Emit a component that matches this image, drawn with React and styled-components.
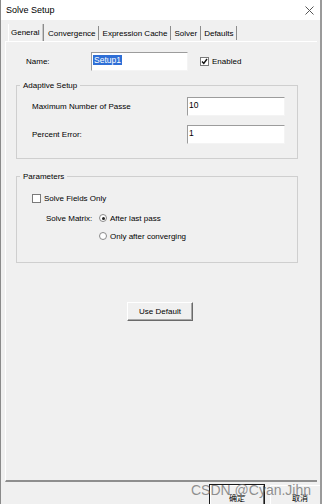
import React from 'react'
import styled, { createGlobalStyle } from 'styled-components'

const Global = createGlobalStyle`
  html, body { margin: 0; padding: 0; background: #f0f0f0; }
  body { font-family: "Liberation Sans", Arial, sans-serif; font-size: 8px; color: #000; }
  * { box-sizing: border-box; }
`

const Window = styled.div`
  position: relative;
  width: 322px;
  height: 504px;
  display: flex;
  flex-direction: column;
  border-left: 1px solid #8a8a8a;
  border-right: 2px solid #9a9a9a;
  background: #f0f0f0;
  overflow: hidden;
  white-space: nowrap;
`

const TitleBar = styled.div`
  height: 20px;
  background: #fff;
  display: flex;
  align-items: center;
  justify-content: space-between;
  padding: 0 6px 0 5px;
  font-size: 9px;
`

const Body = styled.div`
  flex: 1;
  display: flex;
  flex-direction: column;
  padding-top: 4px;
`

const TabStrip = styled.div`
  display: flex;
  align-items: flex-end;
  height: 17px;
  padding-left: 7px;
`

const Tab = styled.div`
  height: ${({ active }) => (active ? '17px' : '14px')};
  display: flex;
  align-items: center;
  padding: ${({ active }) => (active ? '0 4px 0 2px' : '0 2.5px')};
  margin-bottom: ${({ active }) => (active ? '0' : '1px')};
  border-left: 1px solid ${({ active }) => (active ? '#fff' : 'transparent')};
  border-right: 1px solid #8c8c8c;
  box-shadow: ${({ active }) => (active ? 'inset -1px 0 0 #c8c8c8' : 'none')};
`

const Panel = styled.div`
  flex: 1;
  display: flex;
  flex-direction: column;
  margin: 0 3px 0 4px;
  border-top: 1px solid #fff;
  border-left: 1px solid #fff;
  border-bottom: 2px solid #8e8e8e;
  padding: 10px 0 0 0;
`

const NameRow = styled.div`
  display: flex;
  align-items: center;
  padding-left: 20px;
`

const Label = styled.span`
  width: ${({ w }) => w}px;
  flex-shrink: 0;
`

const Field = styled.div`
  width: ${({ w }) => w}px;
  height: 19px;
  background: #fff;
  border-top: 1px solid #9c9c9c;
  border-left: 1px solid #9c9c9c;
  border-bottom: 1px solid #f4f4f4;
  border-right: 1px solid #f4f4f4;
  padding: 2px 0 0 1px;
  line-height: 11px;
  font-size: 8.5px;
`

const Selected = styled.span`
  background: #2f6fd6;
  color: #fff;
  padding: 0 1px;
`

const Check = styled.span`
  width: 9px;
  height: 9px;
  flex-shrink: 0;
  border: 1px solid #7a7a7a;
  background: #fff;
  display: inline-flex;
  align-items: center;
  justify-content: center;
  margin-right: ${({ gap }) => gap}px;
`

const Radio = styled.span`
  width: 8px;
  height: 8px;
  flex-shrink: 0;
  border-radius: 50%;
  border: 1px solid #8a8a8a;
  background: #fff;
  display: inline-flex;
  align-items: center;
  justify-content: center;
  margin-right: 3px;
  &::after {
    content: '';
    width: 3px;
    height: 3px;
    border-radius: 50%;
    background: ${({ on }) => (on ? '#222' : 'transparent')};
  }
`

const Group = styled.fieldset`
  margin: ${({ top }) => top}px 19px 0 10px;
  padding: ${({ pad }) => pad};
  border: 1px solid #cfcfcf;
  min-width: 0;
`

const Legend = styled.legend`
  padding: 0 3px;
  margin-left: -12px;
  line-height: 11px;
`

const FormRow = styled.div`
  display: flex;
  align-items: center;
  justify-content: space-between;
  margin-top: ${({ top }) => top}px;
  padding-right: 12px;
`

const OptRow = styled.div`
  display: flex;
  align-items: center;
  height: 12px;
  margin-top: ${({ top }) => top}px;
  padding-left: ${({ left }) => left}px;
`

const Button = styled.div`
  width: ${({ w }) => w}px;
  height: ${({ h }) => h}px;
  display: flex;
  align-items: center;
  justify-content: center;
  background: #f0f0f0;
  border-top: 1px solid #fff;
  border-left: 1px solid #fff;
  border-right: 1px solid #6a6a6a;
  border-bottom: 1px solid #6a6a6a;
  box-shadow: ${({ dflt }) => (dflt ? '0 0 0 1px #1a1a1a' : 'inset -1px -1px 0 #a8a8a8')};
`

const DefaultWrap = styled.div`
  margin: 39px 0 0 121px;
`

const Footer = styled.div`
  height: 22px;
  display: flex;
  justify-content: flex-end;
  align-items: flex-start;
  gap: 6px;
  padding-top: 3px;
  margin-right: -10px;
  font-family: "Noto Sans CJK SC", sans-serif;
  font-size: 8px;
`

const Watermark = styled.div`
  position: absolute;
  left: 190px;
  top: 482px;
  font-family: "Liberation Sans", Arial, sans-serif;
  font-size: 14px;
  color: rgba(110, 110, 110, 0.75);
  pointer-events: none;
`

export default function App() {
  return (
    <>
      <Global />
      <Window>
        <TitleBar>
          <span>Solve Setup</span>
          <svg width="9" height="9" viewBox="0 0 9 9">
            <path d="M0.5 0.5 L8.5 8.5 M8.5 0.5 L0.5 8.5" stroke="#555" strokeWidth="1" />
          </svg>
        </TitleBar>
        <Body>
          <TabStrip>
            <Tab active>General</Tab>
            <Tab>Convergence</Tab>
            <Tab>Expression Cache</Tab>
            <Tab>Solver</Tab>
            <Tab>Defaults</Tab>
          </TabStrip>
          <Panel>
            <NameRow>
              <Label w={65}>Name:</Label>
              <Field w={97}>
                <Selected>Setup1</Selected>
              </Field>
              <span style={{ width: 12 }} />
              <Check gap={3}>
                <svg width="7" height="7" viewBox="0 0 7 7">
                  <path d="M1 3.5 L2.8 5.5 L6 1" stroke="#111" strokeWidth="1.4" fill="none" />
                </svg>
              </Check>
              <span>Enabled</span>
            </NameRow>

            <Group top={9} pad="0 0 14px 15px">
              <Legend>Adaptive Setup</Legend>
              <FormRow top={6}>
                <span>Maximum Number of Passe</span>
                <Field w={98}>10</Field>
              </FormRow>
              <FormRow top={9}>
                <span>Percent Error:</span>
                <Field w={98}>1</Field>
              </FormRow>
            </Group>

            <Group top={12} pad="0 0 20px 15px">
              <Legend>Parameters</Legend>
              <OptRow top={10} left={0}>
                <Check gap={3} />
                <span>Solve Fields Only</span>
              </OptRow>
              <OptRow top={8} left={14}>
                <Label w={53}>Solve Matrix:</Label>
                <Radio on />
                <span>After last pass</span>
              </OptRow>
              <OptRow top={6} left={67}>
                <Radio />
                <span>Only after converging</span>
              </OptRow>
            </Group>

            <DefaultWrap>
              <Button w={66} h={19}>Use Default</Button>
            </DefaultWrap>
          </Panel>
          <Footer>
            <Button w={54} h={24} dflt>确定</Button>
            <Button w={60} h={24}>取消</Button>
          </Footer>
        </Body>
        <Watermark>CSDN @Cyan.Jihn</Watermark>
      </Window>
    </>
  )
}
